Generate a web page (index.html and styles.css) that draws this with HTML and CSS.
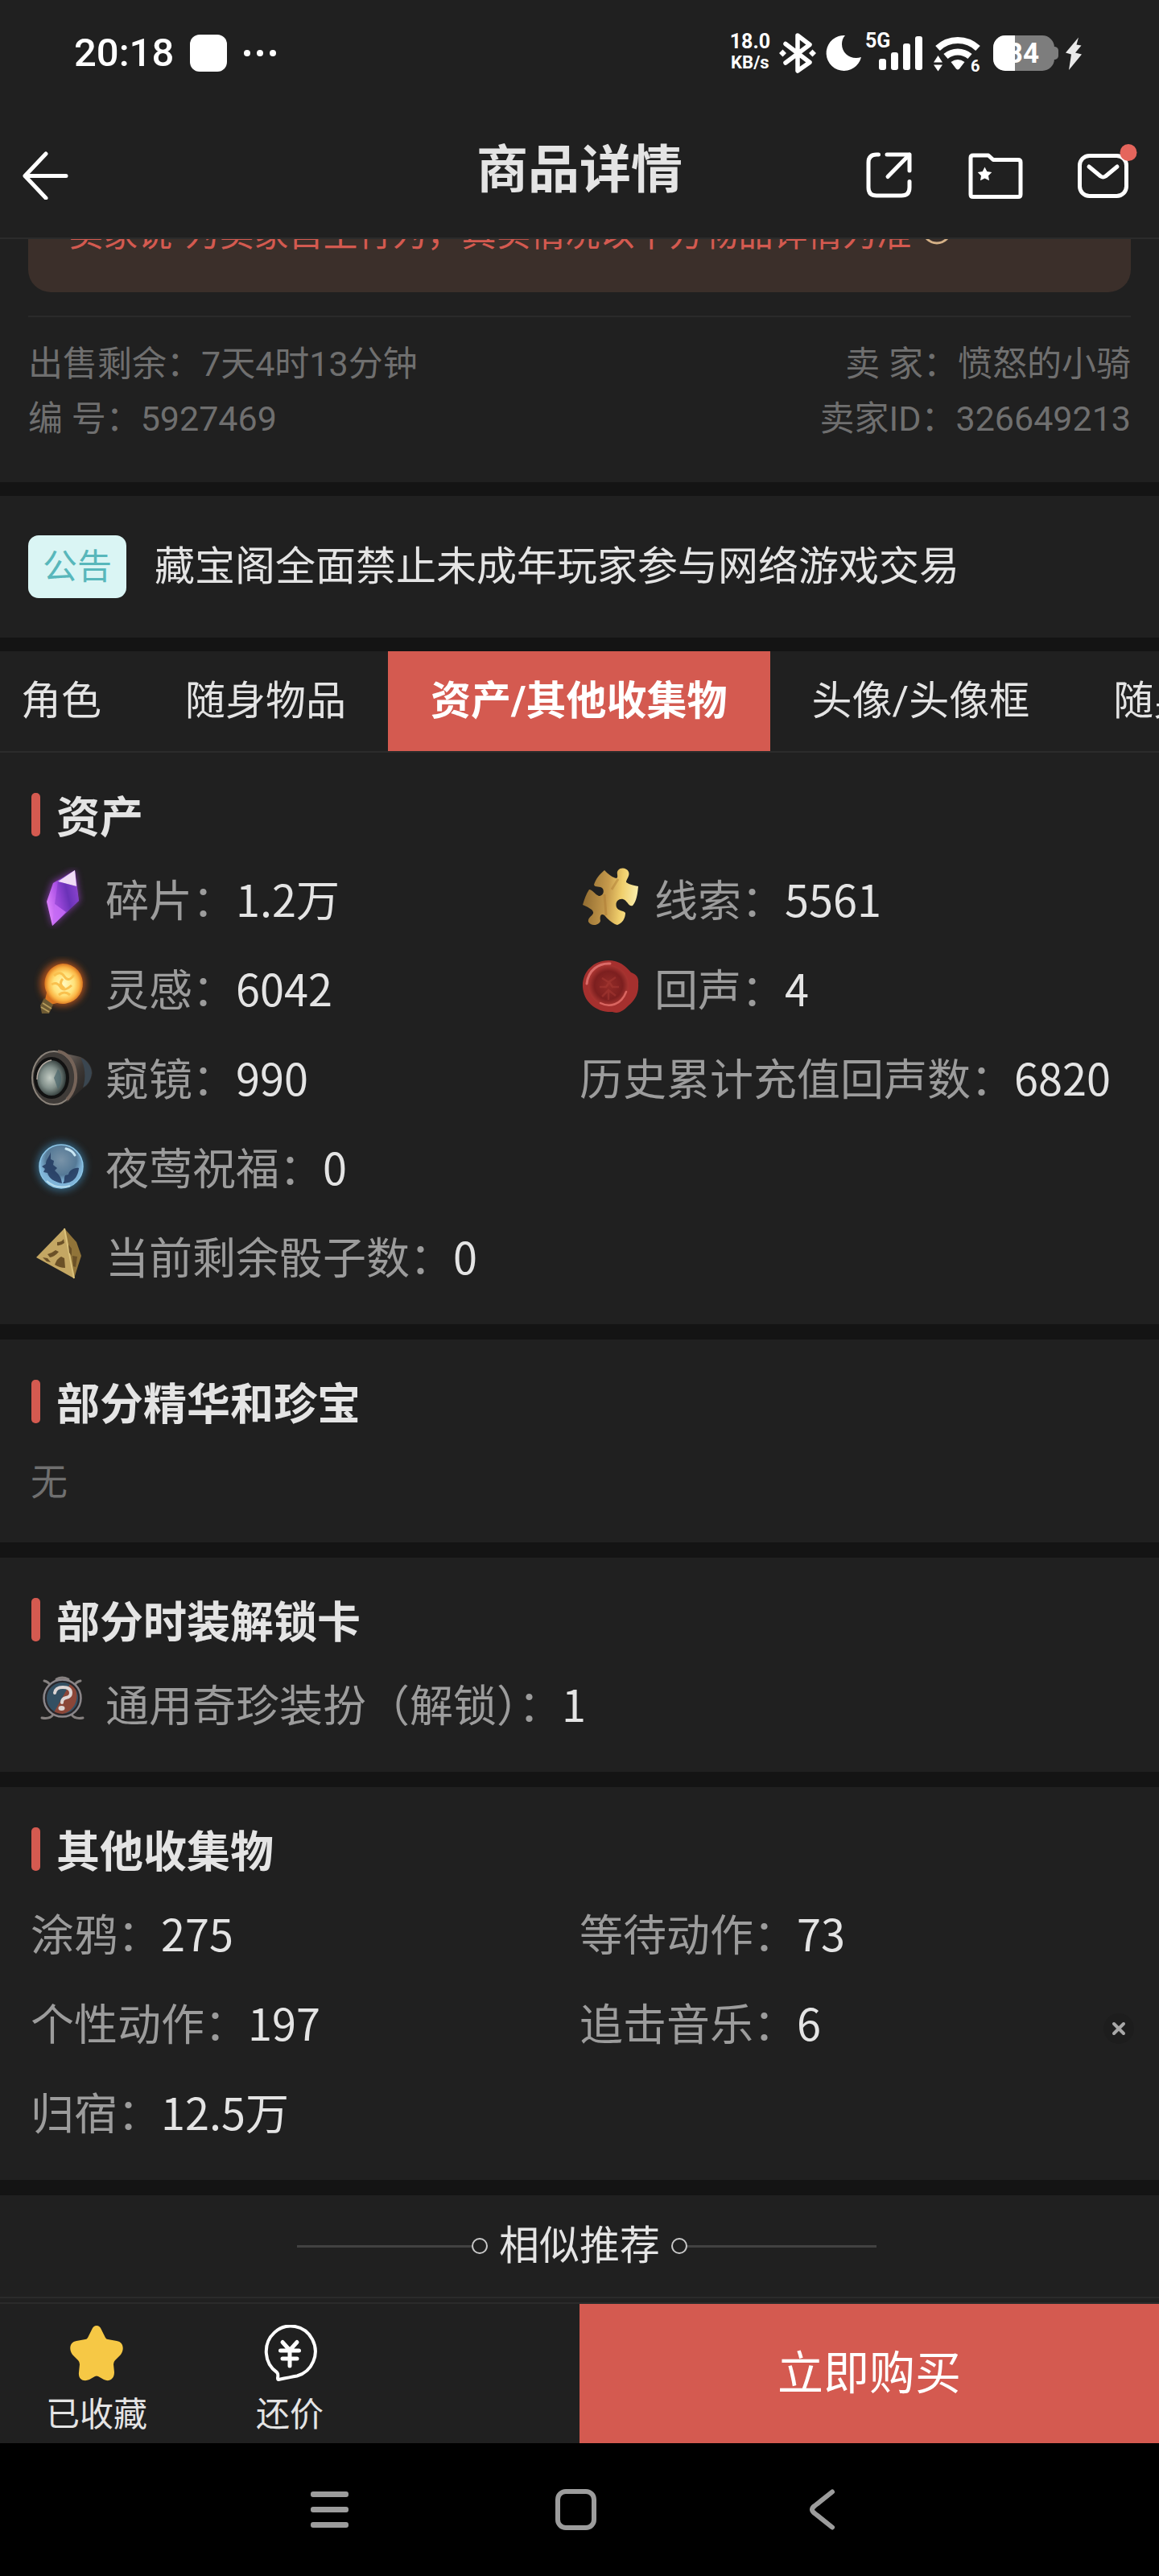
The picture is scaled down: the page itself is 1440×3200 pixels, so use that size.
FILE: index.html
```html
<!DOCTYPE html>
<html lang="zh-CN">
<head>
<meta charset="utf-8">
<meta name="viewport" content="width=device-width, initial-scale=1">
<title>商品详情</title>
<link rel="stylesheet" href="styles.css">
</head>
<body>
<div class="status">
  <span class="status-time">20:18</span>
  <span class="status-app"></span>
  <svg class="status-more" width="40" height="10" viewBox="0 0 40 10" fill="#fff"><circle cx="4" cy="5" r="4"/><circle cx="20" cy="5" r="4"/><circle cx="36" cy="5" r="4"/></svg>
  <div class="status-right">
    <span class="net"><span class="net-num">18.0</span><span class="net-unit">KB/s</span></span>
    <svg width="58" height="52" viewBox="962 40 58 52" fill="#fff"><path d="M976 54.500 1006 77.500 991 88V44l15 11.500L976 78" fill="none" stroke="#fff" stroke-width="5.500" stroke-linejoin="round" stroke-linecap="round"/><path d="M972.500 61.500l4.500 4.500-4.500 4.500L968 66zM1009.500 61.500l4.500 4.500-4.500 4.500L1005 66z"/></svg>
    <svg width="53" height="52" viewBox="1020 40 53 52" fill="#fff"><path d="M1050 44A22 22 0 1 0 1070 71C1058 75 1046 67 1046 55c0-4 1-8 4-11z"/></svg>
    <svg width="80" height="52" viewBox="1073 40 80 52" fill="#fff"><text x="1075" y="59" class="svg-5g">5G</text><rect x="1092" y="73" width="9" height="14" rx="3"/><rect x="1107" y="65" width="9" height="22" rx="3"/><rect x="1122" y="54" width="9" height="33" rx="3"/><rect x="1137" y="45" width="9" height="42" rx="3"/></svg>
    <svg width="73" height="52" viewBox="1153 40 73 52" fill="#fff"><path d="M1165 60A36 36 0 0 1 1215 60M1175 70A23 23 0 0 1 1205 70" fill="none" stroke="#fff" stroke-width="8"/><path d="M1181.500 77Q1190 71 1198.500 77L1192 85.500q-2 2-4 0zM1160 77.500l5.500-8.500 5.500 8.500zM1160 80.500l5.500 8 5.500-8z"/><text x="1206" y="89" class="svg-6">6</text></svg>
    <svg width="94" height="52" viewBox="1226 40 94 52"><rect x="1234" y="44" width="76" height="44" rx="15" fill="#7d7d7d"/><path d="M1309 58h2q4 1 4 5v6q0 4-4 5h-2z" fill="#7d7d7d"/><path d="M1261 44v44h-12a15 15 0 0 1-15-15V59a15 15 0 0 1 15-15z" fill="#fff"/><text x="1291" y="78" text-anchor="end" class="svg-84" fill="#fff">84</text></svg>
    <svg width="24" height="52" viewBox="1320 40 24 52" fill="#e9e9e9"><path d="M1340 46.500 1324 65.500l7 2-3 19.500 16-19.500-8-2 7.500-9-6-1z"/></svg>
  </div>
</div>

<header class="header">
  <button class="icon-btn back" aria-label="返回"><svg width="58" height="60" viewBox="28 187 58 60" fill="none" stroke="#fff" stroke-width="5" stroke-linecap="round" stroke-linejoin="round"><path d="M57 190 31 217.500 57 245M31 217.500H82"/></svg></button>
  <h1 class="title">商品详情</h1>
  <div class="actions">
    <button class="icon-btn" aria-label="分享"><svg width="68" height="68" viewBox="1069 184 68 68" fill="none" stroke="#fff" stroke-width="5" stroke-linecap="round" stroke-linejoin="round"><path d="M1090.500 192H1088q-10 0-10 10v31q0 10 10 10h31q10 0 10-10v-7.500M1101 192h28v20M1129 192l-27 27.500"/></svg></button>
    <button class="icon-btn" aria-label="收藏夹"><svg width="68" height="68" viewBox="1202 184 68 68"><path d="M1208 193h19l6 5.500h31q3 0 3 3v40q0 3-3 3h-56q-3 0-3-3V196q0-3 3-3z" fill="none" stroke="#fff" stroke-width="5" stroke-linejoin="round"/><path d="M1222.500 207.500l2.800 5.500 6 .9-4.300 4.300 1 6.100-5.500-2.800-5.500 2.800 1-6.100-4.300-4.300 6-.9z" fill="#fff"/></svg></button>
    <button class="icon-btn" aria-label="消息"><svg class="mail" width="68" height="68" viewBox="1335 184 68 68"><g fill="none" stroke="#fff" stroke-width="5" stroke-linecap="round" stroke-linejoin="round"><rect x="1340.500" y="193.500" width="58" height="50" rx="12"/><path d="M1352 207l14.500 12q3 2 6 0L1387 207"/></g><circle cx="1401" cy="189.500" r="10.500" fill="#e5655c"/></svg></button>
  </div>
</header>

<main>
  <section class="meta">
    <div class="warn">
      <p class="warn-text">“卖家说”为卖家自主行为，真实情况以下方物品详情为准</p>
      <svg class="warn-icon" width="38" height="38" viewBox="0 0 38 38" fill="none" stroke="#d5b187" stroke-width="3"><circle cx="19" cy="19" r="17"/><path d="M13 15a6 6 0 1 1 6 7v2M19 26v4"/></svg>
    </div>
    <div class="meta-rows">
      <div class="meta-row"><span>出售剩余：7天4时13分钟</span><span>卖 家：愤怒的小骑</span></div>
      <div class="meta-row"><span>编 号：5927469</span><span>卖家ID：326649213</span></div>
    </div>
  </section>

  <section class="notice">
    <span class="badge">公告</span>
    <a class="notice-link" href="#notice">藏宝阁全面禁止未成年玩家参与网络游戏交易</a>
  </section>

  <nav class="tabs">
    <button class="tab">角色</button>
    <button class="tab">随身物品</button>
    <button class="tab tab-on">资产/其他收集物</button>
    <button class="tab">头像/头像框</button>
    <button class="tab">随身物品</button>
  </nav>

  <section class="block">
    <h2 class="block-title">资产</h2>
    <div class="grid">
      <div class="item">
        <svg class="pic" viewBox="0 0 77 77"><defs><linearGradient id="cry" x1="0" y1=".7" x2="1" y2=".3"><stop offset="0" stop-color="#e287ff"/><stop offset=".4" stop-color="#a94fe4"/><stop offset=".65" stop-color="#6b35b8"/><stop offset="1" stop-color="#a052dd"/></linearGradient><filter id="soft" x="-40%" y="-40%" width="180%" height="180%"><feGaussianBlur stdDeviation="4"/></filter></defs><path d="M55 4 27 19 19 42 27 73 61 42z" fill="#9a3fc8" opacity=".75" filter="url(#soft)"/><path d="M55 4 28 20 20 43 27 73 60 42z" fill="url(#cry)"/><path d="M55 4 34 18 57 24z" fill="#f0dcf5"/><path d="M34 18 57 24 60 42 44 56 30 46z" fill="#6a2fb8" opacity=".35"/><path d="M27 73 30 46 44 56z" fill="#c66cf5" opacity=".8"/></svg>
        <span class="label">碎片：</span><span class="value">1.2万</span>
      </div>
      <div class="item">
        <svg class="pic" viewBox="0 0 77 77"><defs><linearGradient id="puz" x1="0" y1=".4" x2="1" y2=".5"><stop offset="0" stop-color="#8f6a30"/><stop offset=".45" stop-color="#c69a4c"/><stop offset=".7" stop-color="#f0cf6c"/><stop offset="1" stop-color="#fbf0b0"/></linearGradient></defs><path d="M31 4C36 9 40 13 46 14 49 12 45 8 48 4 51 0 59 1 61 6 63 11 58 15 58 19 62 22 68 23 73 24 72 34 71 42 66 48 61 50 60 42 54 40 48 39 44 44 46 50 48 55 55 54 57 57 57 64 53 70 47 72 42 71 36 66 31 60 26 57 25 62 26 67 24 73 14 74 11 68 10 62 18 60 17 56 16 52 10 50 4 47 6 40 8 34 12 28 16 28 19 34 24 36 29 36 31 31 29 27 26 23 19 26 18 22 20 15 25 9 31 4z" fill="url(#puz)"/><path d="M31 34 33 60M48 15 40 28" stroke="#a8742f" stroke-width="3" opacity=".4"/></svg>
        <span class="label">线索：</span><span class="value">5561</span>
      </div>
      <div class="item">
        <svg class="pic" viewBox="0 0 77 77"><defs><radialGradient id="bulb"><stop offset="0" stop-color="#fffac0"/><stop offset=".55" stop-color="#ffe27a"/><stop offset=".8" stop-color="#fbb545"/><stop offset="1" stop-color="#d87420"/></radialGradient></defs><circle cx="40" cy="34" r="28" fill="#d9601a" opacity=".7" filter="url(#soft)"/><path d="M40 9a25 25 0 1 1-7 49l-8 2-7-6 2-9A25 25 0 0 1 40 9z" fill="url(#bulb)"/><path d="M29 24q8-7 13 1t12-2M26 35q7-4 11 3t14-2M35 48q7-6 14 0M40 28q-6 6 2 12" fill="none" stroke="#f9c04e" stroke-width="3"/><path d="M17 52 28 60 23 71 14 71 12 61z" fill="#6d5a33"/><path d="M15 58 26 65M13 63 23 69" stroke="#b59b5c" stroke-width="2"/></svg>
        <span class="label">灵感：</span><span class="value">6042</span>
      </div>
      <div class="item">
        <svg class="pic" viewBox="0 0 77 77"><defs><radialGradient id="seal"><stop offset="0" stop-color="#932c28"/><stop offset=".7" stop-color="#7c1f1f"/><stop offset="1" stop-color="#a83531"/></radialGradient></defs><path d="M36 5c14 0 22 8 28 15 6 2 10 6 9 14 1 14-6 22-12 27-6 6-12 11-20 8C20 70 5 56 4 38 3 20 17 5 36 5z" fill="#a5302e"/><path d="M9 34C11 17 24 8 38 9" fill="none" stroke="#e77b77" stroke-width="3" stroke-linecap="round" opacity=".8"/><circle cx="36" cy="36" r="25" fill="url(#seal)"/><path d="M58 44C52 60 38 64 26 58" fill="none" stroke="#d96560" stroke-width="2.500" stroke-linecap="round"/><path d="M28 27l8 5 9-6M25 38h8l4-6 4 6h8M28 50l8-8 9 7M36 42v12" fill="none" stroke="#ae3d37" stroke-width="2.500" opacity=".45"/></svg>
        <span class="label">回声：</span><span class="value">4</span>
      </div>
      <div class="item">
        <svg class="pic" viewBox="0 0 77 77"><defs><linearGradient id="tube" x1="0" y1="0" x2="1" y2="1"><stop offset="0" stop-color="#8c8078"/><stop offset=".5" stop-color="#3d3835"/><stop offset="1" stop-color="#191817"/></linearGradient><radialGradient id="glass" cx=".45" cy=".5"><stop offset="0" stop-color="#c3ccc4"/><stop offset=".55" stop-color="#82908b"/><stop offset="1" stop-color="#303a39"/></radialGradient></defs><path d="M30 7 58 13C69 15 76 24 77 34 75 45 70 51 65 53L46 70 28 73z" fill="url(#tube)"/><path d="M62 15c8 3 14 11 14 19-1 9-5 15-11 18 4-12 3-26-3-37z" fill="#3a4650"/><ellipse cx="29" cy="40" rx="27" ry="33" fill="#3f3b38" stroke="#8c847b" stroke-width="2"/><path d="M34 7C56 10 65 47 45 67" fill="none" stroke="#766459" stroke-width="4"/><ellipse cx="26" cy="40" rx="20" ry="24" fill="url(#glass)" stroke="#121212" stroke-width="4"/><path d="M26 18C15 20 8 30 8 42" fill="none" stroke="#b5aaa0" stroke-width="1.500"/><path d="M34 29c6 8 5 18 0 25l-5-14z" fill="#4a656b" opacity=".7"/></svg>
        <span class="label">窥镜：</span><span class="value">990</span>
      </div>
      <div class="item"><span class="label">历史累计充值回声数：</span><span class="value">6820</span></div>
      <div class="item item-wide">
        <svg class="pic" viewBox="0 0 77 77"><defs><radialGradient id="orb" cx=".5" cy=".35"><stop offset="0" stop-color="#7993a8"/><stop offset=".7" stop-color="#557996"/><stop offset="1" stop-color="#7fb4d8"/></radialGradient></defs><circle cx="38" cy="39" r="31" fill="#397398" opacity=".7" filter="url(#soft)"/><circle cx="38" cy="39" r="27" fill="url(#orb)" stroke="#8cc5e6" stroke-width="1.500"/><path d="M25 21c-2 7-6 9-6 15l-5 3 4 3-2 4 5 1c2 7 8 11 18 13-1-9-5-12-9-16l3-3-5-4 1-5-4-2zM40 60c3-3 1-7 3-10l4-1c1-5 7-9 13-8-1 10-6 19-20 19z" fill="#263d63" opacity=".9"/><path d="M44 17q8 2 11 8" fill="none" stroke="#c9e7f4" stroke-width="3" stroke-linecap="round"/><path d="M20 57q12 11 29 6" fill="none" stroke="#b6dced" stroke-width="2"/></svg>
        <span class="label">夜莺祝福：</span><span class="value">0</span>
      </div>
      <div class="item item-wide">
        <svg class="pic" viewBox="0 0 77 77"><path d="M42 5 7 41 54 67z" fill="#c4a763"/><path d="M42 5 57 22 63 39 54 67z" fill="#917439"/><path d="M42 5 54 67" stroke="#dcc37c" stroke-width="2"/><path d="M33 22q6 0 8-4l1 5q-5 4-9 3zM21 37q5-1 10-5l4 2q-5 6-11 7zM30 50q3-8 8-10l4 2 1 12q-7 0-13-4zM15 41l6 1 4 5-5-1zM47 25l4 5v9l-3-4zM52 39l6 1-2 13-3-1z" fill="#6b5127"/></svg>
        <span class="label">当前剩余骰子数：</span><span class="value">0</span>
      </div>
    </div>
  </section>

  <section class="block">
    <h2 class="block-title">部分精华和珍宝</h2>
    <p class="empty">无</p>
  </section>

  <section class="block">
    <h2 class="block-title">部分时装解锁卡</h2>
    <div class="grid">
      <div class="item item-wide">
        <svg class="pic" viewBox="0 0 77 77"><path d="M17 11q5 1 8 6M62 11q-5 1-8 6M28 53q-4 6-14 4M51 53q4 6 14 4M32 9q7-4 15 0" fill="none" stroke="#85807f" stroke-width="3" stroke-linecap="round"/><circle cx="39.500" cy="32.500" r="23" fill="#345063"/><path d="M50 13A23 23 0 0 1 28 52z" fill="#8b4638"/><circle cx="39.500" cy="32.500" r="23" fill="none" stroke="#8b8588" stroke-width="2.500"/><circle cx="39.500" cy="32.500" r="20.500" fill="none" stroke="#2a2528" stroke-width="2"/><path d="M30 26q1-7 10-7 10 0 10 7 0 5-6 6-5 1-5 6" fill="none" stroke="#ddd5d4" stroke-width="4" stroke-linecap="round"/><ellipse cx="38.500" cy="45" rx="4" ry="3" fill="#ddd5d4"/></svg>
        <span class="label">通用奇珍装扮（解锁）：</span><span class="value">1</span>
      </div>
    </div>
  </section>

  <section class="block">
    <h2 class="block-title">其他收集物</h2>
    <div class="grid">
      <div class="item"><span class="label">涂鸦：</span><span class="value">275</span></div>
      <div class="item"><span class="label">等待动作：</span><span class="value">73</span></div>
      <div class="item"><span class="label">个性动作：</span><span class="value">197</span></div>
      <div class="item"><span class="label">追击音乐：</span><span class="value">6</span></div>
      <div class="item"><span class="label">归宿：</span><span class="value">12.5万</span></div>
    </div>
    <button class="float-close" aria-label="关闭"><svg width="18" height="18" viewBox="0 0 18 18" stroke="#a8a8a8" stroke-width="4" stroke-linecap="round"><path d="M3 3l12 12M15 3 3 15"/></svg></button>
  </section>

  <section class="recommend">
    <span class="rule rule-left"></span>
    <h2 class="recommend-title">相似推荐</h2>
    <span class="rule rule-right"></span>
  </section>
</main>

<footer class="bar">
  <button class="bar-btn">
    <svg width="68" height="70" viewBox="0 0 68 70"><path d="M34 1q4 0 6 5l5 10q1 2 3 2l11 2c8 1 10 10 5 17l-7 7q-2 2-2 5l1 10c0 9-7 12-13 9l-7-4q-2-1-4 0l-7 4c-7 3-14 0-13-9l1-10q0-3-2-5l-7-7c-5-7-3-16 5-17l11-2q2 0 3-2l5-10q2-5 6-5z" fill="#f6c845"/></svg>
    已收藏
  </button>
  <button class="bar-btn">
    <svg width="68" height="70" viewBox="0 0 68 70" fill="none" stroke="#fff" stroke-linecap="round" stroke-linejoin="round"><path d="M18 59A30.500 31.500 0 1 1 43 63.500Q35 65 20 68q-1 0-1-2 1-5-1-7z" stroke-width="4"/><path d="M25 21.500l9 10 9-10M22.500 32h23M25 42h18M34 32v19" stroke-width="5"/></svg>
    还价
  </button>
  <button class="buy">立即购买</button>
</footer>

<nav class="sysnav">
  <button class="icon-btn" aria-label="最近任务"><svg width="51" height="51" viewBox="0 0 51 51" fill="#9c9c9c"><rect x="2" y="3" width="47" height="7" rx="3"/><rect x="2" y="22" width="47" height="7" rx="3"/><rect x="2" y="41" width="47" height="7" rx="3"/></svg></button>
  <button class="icon-btn" aria-label="主屏幕"><svg width="51" height="51" viewBox="0 0 51 51" fill="none" stroke="#9c9c9c" stroke-width="6"><rect x="3" y="3" width="45" height="45" rx="10"/></svg></button>
  <button class="icon-btn" aria-label="返回上一级"><svg width="51" height="51" viewBox="0 0 51 51" fill="none" stroke="#9c9c9c" stroke-width="6" stroke-linecap="round"><path d="M38 3.500 16 21q-6 4.500 0 9L38 47.500"/></svg></button>
</nav>
</body>
</html>
```
FILE: styles.css
```css
*, *::before, *::after { box-sizing: border-box; }

body {
  margin: 0;
  background: #000;
  color: #e4e4e4;
  font-family: Roboto, "Noto Sans CJK SC", sans-serif;
  overflow-x: hidden;
}

main { background: #141414; }

h1, h2, p { margin: 0; }

svg { display: block; flex: none; }

button {
  margin: 0;
  padding: 0;
  border: 0;
  background: none;
  color: inherit;
  font: inherit;
}

.icon-btn { display: block; }

/* system status bar */
.status {
  display: flex;
  align-items: center;
  padding: 40px 96px 40px 92px;
  background: #202020;
  color: #fff;
}
.status-time { font-size: 49px; line-height: 52px; font-weight: 500; }
.status-app {
  width: 46px;
  height: 46px;
  margin: 0 21px 0 20px;
  border-radius: 12px;
  background: #fff;
}
.status-right { display: flex; margin-left: auto; }
.net {
  display: flex;
  flex-direction: column;
  align-items: center;
  margin-right: 5px;
  font-weight: 700;
}
.net-num { font-size: 25px; line-height: 24px; }
.net-unit { font-size: 22px; line-height: 28px; }
.svg-5g { font-size: 25px; font-weight: 700; }
.svg-6 { font-size: 20px; font-weight: 700; }
.svg-84 { font-size: 35px; font-weight: 700; }

/* page header */
.header {
  display: grid;
  grid-template-columns: 1fr auto 1fr;
  align-items: center;
  height: 165px;
  padding: 8px 36px 0;
  border-bottom: 2px solid #2b2b2b;
  background: #202020;
}
.back { justify-self: start; margin-left: -8px; }
.title { font-size: 64px; line-height: 64px; font-weight: 700; padding-bottom: 12px; }
.actions { display: flex; justify-content: flex-end; gap: 65px; }
.mail { overflow: visible; }

/* listing facts */
.meta {
  height: 302px;
  padding: 0 35px;
  background: #202020;
  font-size: 43px;
}
.warn {
  display: flex;
  align-items: flex-end;
  height: 66px;
  padding: 0 35px 42px;
  border-radius: 0 0 28px 28px;
  background: #3b2f2a;
  overflow: hidden;
}
.warn-text { line-height: 60px; color: #d45a50; white-space: nowrap; }
.warn-icon { margin: 0 0 17px 12px; }
.meta-rows {
  margin-top: 29px;
  padding-top: 24px;
  border-top: 2px solid #2a2a2a;
  color: #6f6f6f;
}
.meta-row { display: flex; justify-content: space-between; line-height: 68px; }

.notice {
  display: flex;
  align-items: center;
  gap: 35px;
  height: 176px;
  margin: 17px 0;
  padding: 0 35px;
  background: #202020;
}
.badge {
  padding: 0 18px;
  border-radius: 13px;
  background: #daf5f4;
  color: #58b7bb;
  font-size: 43px;
  line-height: 78px;
}
.notice-link {
  color: inherit;
  font-size: 50px;
  line-height: 60px;
  text-decoration: none;
}

.tabs {
  display: flex;
  height: 126px;
  border-bottom: 2px solid #2b2b2b;
  background: #202020;
  overflow: hidden;
}
.tab {
  flex: none;
  padding: 0 52px;
  font-size: 50px;
  line-height: 60px;
  white-space: nowrap;
}
.tab:first-child { padding-left: 26px; }
.tab-on { padding: 0 53px; background: #d45a50; color: #fff; font-weight: 700; }

/* collection blocks */
.block {
  position: relative;
  padding: 50px 38px 30px;
  background: #202020;
  font-family: "Noto Sans CJK SC", sans-serif;
}
.block + .block { margin-top: 19px; }
.block-title {
  display: flex;
  gap: 20px;
  margin-bottom: 21px;
  font-size: 54px;
  line-height: 54px;
  font-weight: 700;
}
.block-title::before {
  content: "";
  width: 11px;
  height: 54px;
  margin-left: 1px;
  border-radius: 5px;
  background: #d45a50;
}
.grid { display: grid; grid-template-columns: 1fr 1fr; }
.item {
  display: flex;
  align-items: center;
  height: 111px;
  font-size: 54px;
  white-space: nowrap;
}
.item-wide { grid-column: 1 / -1; }
.pic { width: 77px; height: 77px; margin-right: 16px; }
.label { color: #9c9c9c; }
.empty { color: #6f6f6f; font-size: 46px; line-height: 97px; }

.float-close {
  position: absolute;
  top: 281px;
  right: 31px;
  display: flex;
  align-items: center;
  justify-content: center;
  width: 38px;
  height: 38px;
  border-radius: 50%;
  background: #1d1d1d;
}

.recommend {
  display: flex;
  align-items: center;
  justify-content: center;
  height: 128px;
  margin-top: 19px;
  padding-left: 18px;
  border-bottom: 2px solid #2b2b2b;
  background: #202020;
}
.recommend-title {
  margin: 0 14px;
  font-size: 50px;
  line-height: 60px;
  font-weight: 400;
}
.rule { display: flex; align-items: center; }
.rule::before { content: ""; width: 217px; height: 3px; background: #424242; }
.rule::after {
  content: "";
  width: 20px;
  height: 20px;
  border: 2px solid #c8c8c8;
  border-radius: 50%;
}
.rule-right { flex-direction: row-reverse; }
.rule-right::before { width: 235px; }

/* purchase bar */
.bar {
  display: grid;
  grid-template: 7px 173px / 1fr 1fr 1fr 3fr;
  background: #202020;
}
.bar::before {
  content: "";
  grid-column: 1 / -1;
  border-bottom: 2px solid #2b2b2b;
}
.bar-btn {
  display: flex;
  flex-direction: column;
  align-items: center;
  padding-top: 26px;
  gap: 10px;
  font-size: 42px;
  line-height: 64px;
}
.buy {
  grid-column: 4;
  background: #d45a50;
  color: #fff;
  font-size: 57px;
  line-height: 60px;
}

.sysnav {
  display: flex;
  align-items: center;
  justify-content: center;
  gap: 255px;
  height: 165px;
  padding-right: 10px;
  background: #000;
}
```
